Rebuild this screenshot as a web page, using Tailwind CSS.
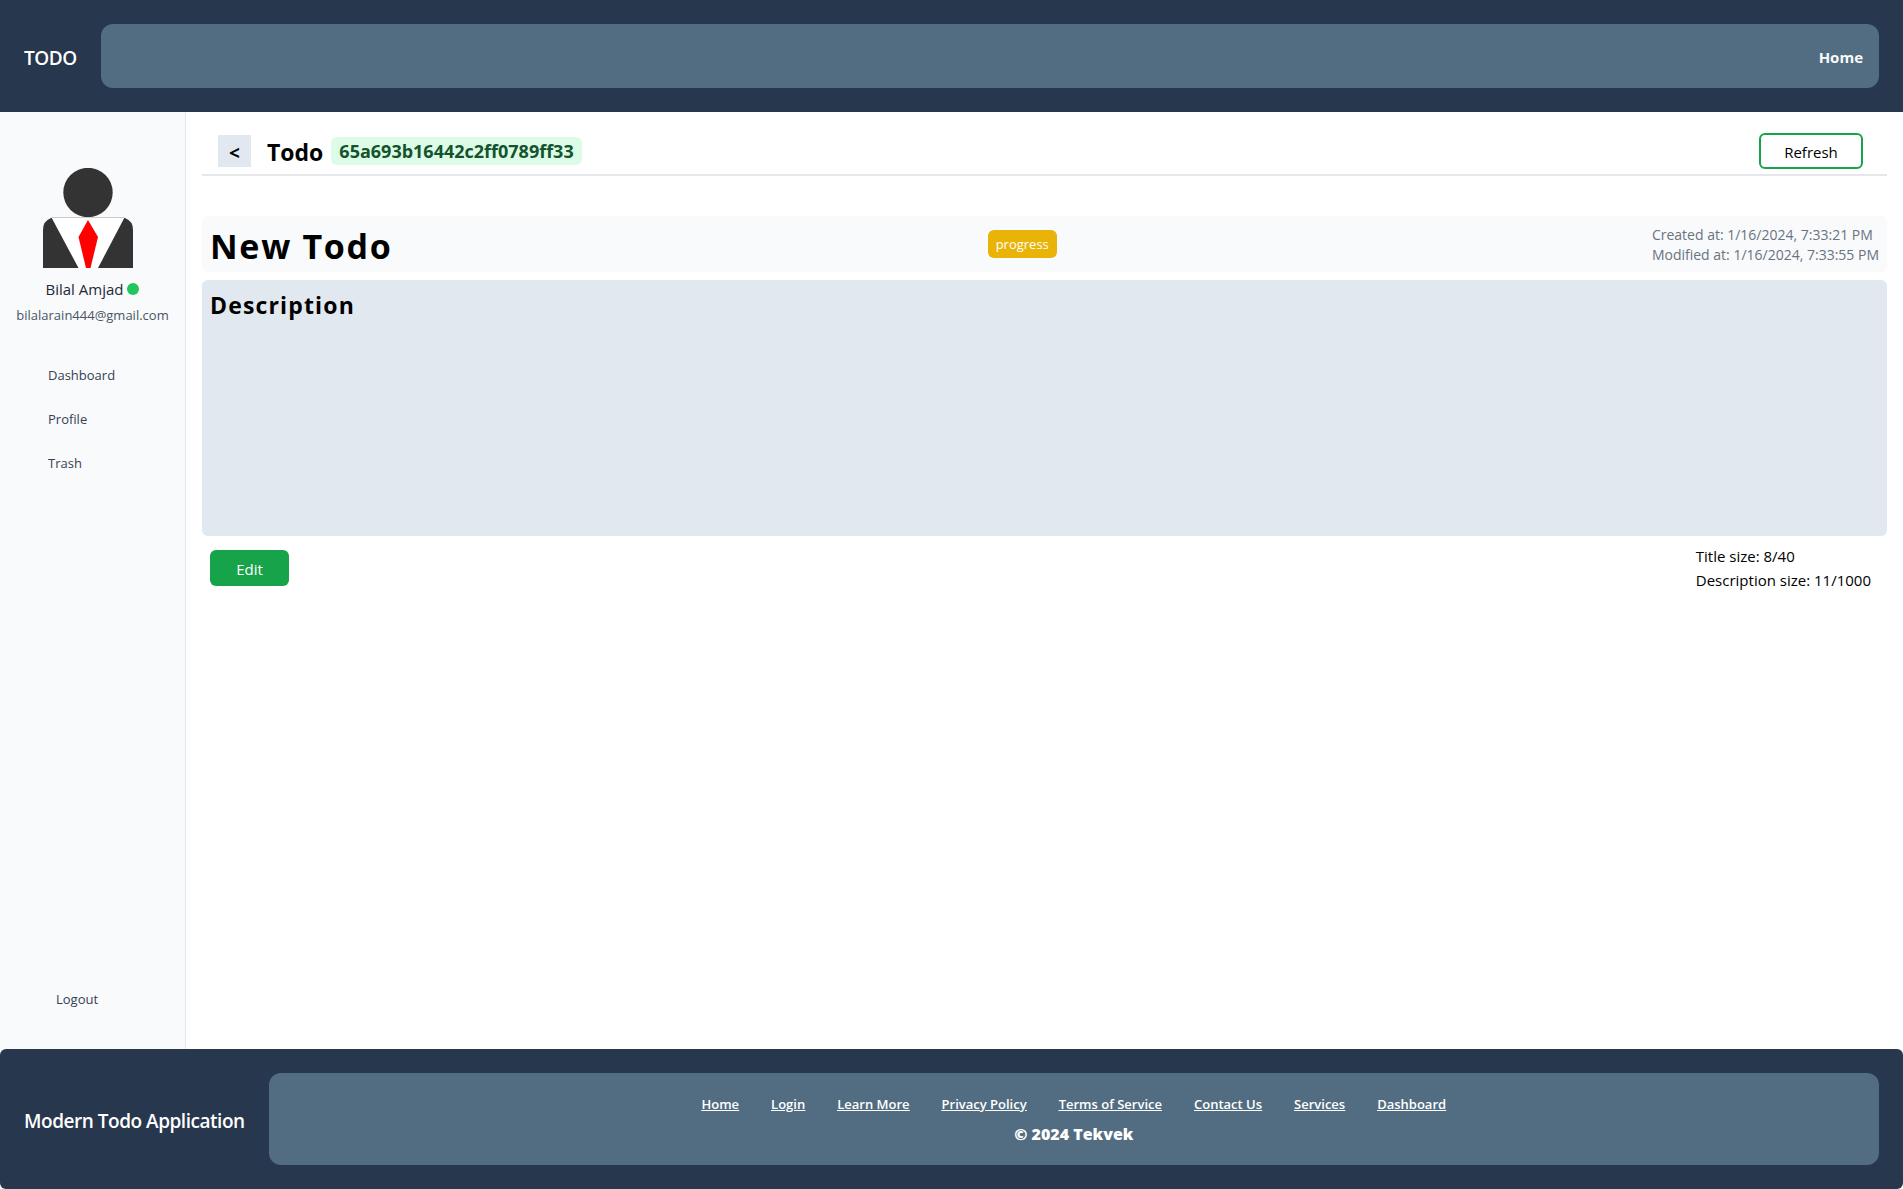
<!DOCTYPE html>
<html lang="en">
<head>
<meta charset="utf-8">
<meta name="viewport" content="width=device-width, initial-scale=1">
<title>Todo</title>
<script src="https://cdn.jsdelivr.net/npm/@tailwindcss/browser@4"></script>
</head>
<body class="flex min-h-screen flex-col bg-white font-['Segoe_UI','Open_Sans',sans-serif] text-[15px] leading-6 text-black">
<header class="flex items-center gap-6 bg-[#27374d] p-6">
  <a href="#" class="pt-1 text-[19px] leading-7 font-semibold tracking-tight text-white">TODO</a>
  <nav class="flex h-16 flex-1 items-center justify-end rounded-xl bg-[#526d82] px-4">
    <a href="#" class="pt-0.5 font-bold text-slate-50">Home</a>
  </nav>
</header>

<div class="flex flex-1">
  <aside class="flex w-[186px] shrink-0 flex-col border-r border-[#e5e7eb] bg-[#f8fafc] px-4 pt-14 pb-8">
    <div class="flex flex-col">
      <svg class="ml-[27px] h-[100px] w-[90px]" viewBox="0 0 90 100" role="img" aria-label="Avatar">
        <circle cx="45" cy="24.5" r="24.7" fill="#333"/>
        <path d="M0 100V62Q0 53 8 50H82Q90 53 90 62V100Z" fill="#333"/>
        <path d="M8.500 49.500H81.500L55 100H35.500Z" fill="#fff"/>
        <path d="M8.500 49.500H81.500" stroke="#ccc" stroke-width="1"/>
        <path d="M45 52L55 69L47.500 100H43L35.500 69Z" fill="red"/>
      </svg>
      <div class="mt-[9px] flex items-center justify-center gap-1 text-[#1f2937]">
        <span>Bilal Amjad</span>
        <span class="size-3 rounded-full bg-[#22c55e]"></span>
      </div>
      <p class="mt-1 text-center text-[13px] leading-5 text-[#4b5563]">bilalarain444@gmail.com</p>
    </div>
    <nav class="mt-7 flex flex-col text-[13px] leading-5 text-[#374151]">
      <a href="#" class="px-8 py-3">Dashboard</a>
      <a href="#" class="px-8 py-3">Profile</a>
      <a href="#" class="px-8 py-3">Trash</a>
    </nav>
    <button type="button" class="mt-auto w-full px-10 pt-1 pb-2 text-left text-[13px] leading-5 text-[#374151]">Logout</button>
  </aside>

  <main class="min-w-0 flex-1 px-4 pt-4">
    <div class="flex h-12 items-center justify-between border-b-2 border-[#e5e7eb] pr-6 pl-4">
      <div class="flex items-center">
        <button type="button" aria-label="Back" class="h-8 w-[33px] bg-[#e2e8f0] pt-1 text-[19px] font-bold">&lt;</button>
        <h1 class="ml-4 pt-0.5 text-[23px] leading-8 font-bold">Todo</h1>
        <span class="ml-2 rounded-md bg-[#dcfce7] px-2 text-[18px] leading-7 font-bold text-[#14532d]">65a693b16442c2ff0789ff33</span>
      </div>
      <button type="button" class="h-9 w-[104px] rounded-md border-2 border-[#16a34a] pt-0.5">Refresh</button>
    </div>

    <section class="mt-10 flex h-14 items-center justify-between rounded-md bg-[#f8fafc] px-2">
      <h2 class="pt-1 text-[34px] leading-10 font-bold tracking-wider">New Todo</h2>
      <span class="rounded-md bg-[#eab308] px-2 py-1 text-[13px] leading-5 text-white">progress</span>
      <div class="pt-0.5 text-[14px] leading-5 text-[#6b7280]">
        <p>Created at: 1/16/2024, 7:33:21 PM</p>
        <p>Modified at: 1/16/2024, 7:33:55 PM</p>
      </div>
    </section>

    <section class="mt-2 min-h-64 rounded-md bg-[#e2e8f0] px-2 py-[9px]">
      <p class="text-[23px] leading-8 font-bold tracking-wider">Description</p>
    </section>

    <div class="mt-2 flex items-center justify-between pr-4 pl-2">
      <button type="button" class="h-9 w-[79px] rounded-md bg-[#16a34a] pt-0.5 text-white">Edit</button>
      <div>
        <p>Title size: 8/40</p>
        <p>Description size: 11/1000</p>
      </div>
    </div>
  </main>
</div>

<footer class="flex items-center gap-6 rounded-md bg-[#27374d] p-6">
  <a href="#" class="pt-1 text-[19px] leading-7 font-semibold tracking-tight text-white">Modern Todo Application</a>
  <div class="flex h-[92px] flex-1 flex-col items-center justify-center rounded-xl bg-[#526d82] pt-0.5 text-white">
    <nav class="flex gap-8 pb-2 text-[13px] leading-5 font-semibold underline">
      <a href="#">Home</a>
      <a href="#">Login</a>
      <a href="#">Learn More</a>
      <a href="#">Privacy Policy</a>
      <a href="#">Terms of Service</a>
      <a href="#">Contact Us</a>
      <a href="#">Services</a>
      <a href="#">Dashboard</a>
    </nav>
    <p class="text-[16px] font-extrabold">© 2024 Tekvek</p>
  </div>
</footer>
</body>
</html>
